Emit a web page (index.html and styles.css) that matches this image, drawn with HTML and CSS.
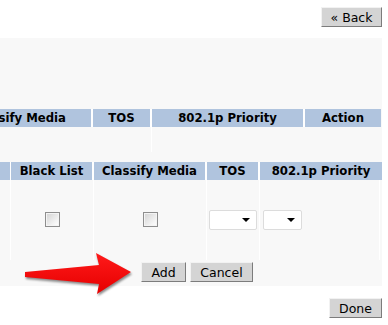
FILE: index.html
```html
<!DOCTYPE html>
<html lang="en">
<head>
    <meta charset="UTF-8">
    <link rel="stylesheet" href="styles.css">
</head>
<body>
    <div class="top">
        <button class="btn b-back">&laquo; Back</button>
    </div>

    <div class="panel">
        <div class="clip">
            <div class="g1 head">
                <div class="th">Classify Media</div>
                <div class="th">TOS</div>
                <div class="th">802.1p Priority</div>
                <div class="th">Action</div>
            </div>
            <div class="g1 row1">
                <div class="td"></div>
                <div class="td line"></div>
                <div class="td"></div>
                <div class="td"></div>
            </div>
        </div>

        <div class="clip second">
            <div class="g2 head">
                <div class="th"></div>
                <div class="th">Black List</div>
                <div class="th">Classify Media</div>
                <div class="th">TOS</div>
                <div class="th">802.1p Priority</div>
            </div>
            <div class="g2 row2">
                <div class="td line"></div>
                <div class="td line center"><span class="chk"></span></div>
                <div class="td line center"><span class="chk"></span></div>
                <div class="td line"><span class="sel sel-tos"></span></div>
                <div class="td line"><span class="sel sel-pri"></span></div>
            </div>
        </div>

        <div class="actions">
            <button class="btn b-add">Add</button>
            <button class="btn b-cancel">Cancel</button>
        </div>
    </div>

    <div class="bottom">
        <button class="btn b-done">Done</button>
    </div>

    <!-- arrow pointing at Add -->
    <svg class="arrow" width="120" height="50" viewBox="20 250 120 50">
        <defs>
            <linearGradient id="red" x1="0" y1="0" x2="0" y2="1">
                <stop offset="0" stop-color="#ff1a1a"/>
                <stop offset="1" stop-color="#e60000"/>
            </linearGradient>
        </defs>
        <polygon points="25,272 99,265 96,253 131,272 97,294 99,284 25,277" fill="url(#red)"/>
    </svg>
</body>
</html>
```

FILE: styles.css
```css
*{
    padding: 0;
    margin: 0;
    box-sizing: border-box;
}

body{
    position: relative;
    width: 388px;
    height: 325px;
    background-color: #fff;
    font-family: "DejaVu Sans", Verdana, sans-serif;
    overflow: hidden;
}

.top{
    display: flex;
    justify-content: flex-end;
    padding: 7px 6px 0 0;
    height: 38px;
}

.btn{
    height: 20px;
    font-family: "DejaVu Sans", Verdana, sans-serif;
    font-size: 12.5px;
    color: #000;
    background-color: #d4d4d4;
    border: 1px solid;
    border-color: #f2f2f2 #7c7c7c #7c7c7c #f2f2f2;
    text-align: center;
}
.b-back{ width: 61px; }
.b-add{ width: 45px; }
.b-cancel{ width: 63px; }
.b-done{ width: 53px; }

.panel{
    width: 382px;
    background-color: #f8f8f8;
    padding: 71px 0 4px 0;
}

.clip{
    overflow: hidden;
}
.second{
    margin-top: 10px;
}

.g1{
    display: grid;
    grid-template-columns: 147px 59px 153px 76px;
    margin-left: -54px;
}
.g2{
    display: grid;
    grid-template-columns: 11px 83px 113px 53px 122px;
}

.head .th{
    height: 18px;
    line-height: 18px;
    background-color: #b0c4de;
    border-right: 2px solid #fff;
    font-size: 11.7px;
    font-weight: bold;
    text-align: center;
    white-space: nowrap;
    overflow: hidden;
    color: #000;
}
.g2.head .th:first-child{
    border-right-width: 1px;
}
.head .th:last-child{
    border-right: none;
}

.row1 .td{
    height: 25px;
}
.row2 .td{
    height: 80px;
}
.td.line{
    border-right: 1px solid #fff;
}
.row2 .td:last-child{
    margin-right: 2px;
}
.row2 .td{
    display: flex;
    align-items: center;
    padding: 0 2px;
}
.row2 .td:nth-child(5){
    padding-left: 3px;
}
.td.center{
    justify-content: center;
}

.chk{
    display: block;
    width: 15px;
    height: 15px;
    border: 1px solid #8e8e8e;
    box-shadow: inset 0 0 0 1px #f4f4f4;
    background: linear-gradient(135deg, #d2d2d2, #f6f6f6 75%, #fff);
    margin-top: -1px;
}

.sel{
    position: relative;
    display: block;
    height: 20px;
    background-color: #fff;
    border: 1px solid #dcdcdc;
    border-radius: 2px;
}
.sel::after{
    content: '';
    position: absolute;
    top: 7px;
    border-left: 4px solid transparent;
    border-right: 4px solid transparent;
    border-top: 4px solid #000;
}
.sel-tos{ width: 48px; }
.sel-tos::after{ left: 32px; }
.sel-pri{ width: 39px; }
.sel-pri::after{ left: 23px; }

.actions{
    display: flex;
    gap: 4px;
    padding-left: 141px;
    margin-top: 2px;
}

.bottom{
    display: flex;
    justify-content: flex-end;
    padding: 12px 6px 0 0;
}

.arrow{
    position: absolute;
    left: 20px;
    top: 250px;
    filter: drop-shadow(1px 2px 1px rgba(0,0,0,.45));
}
```
